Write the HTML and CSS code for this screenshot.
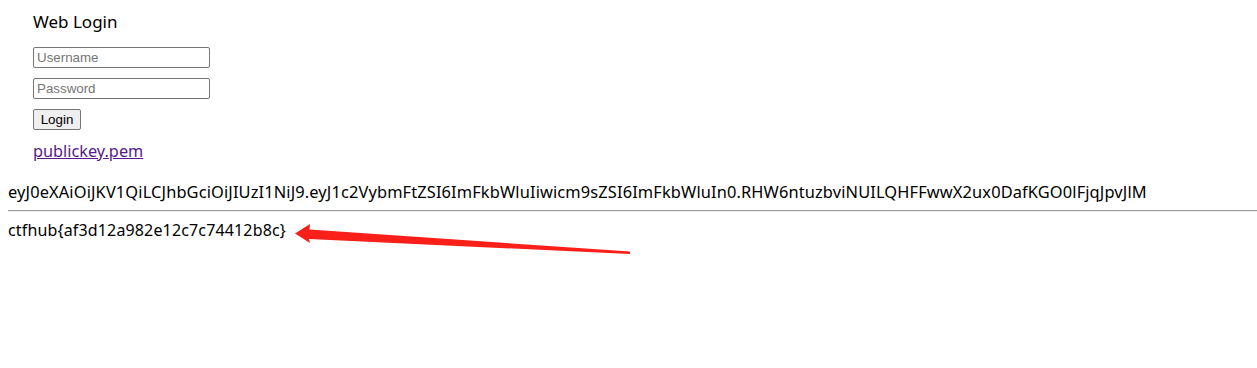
FILE: index.html
```html
<!DOCTYPE html>
<html>
<head>
<meta charset="utf-8">
<link rel="stylesheet" href="styles.css">
</head>
<body>
<div class="login">
  <div class="title">Web Login</div>
  <form class="form">
    <input class="field" type="text" placeholder="Username">
    <input class="field" type="password" placeholder="Password">
    <button class="btn" type="button">Login</button>
  </form>
  <a class="key" href="#">publickey.pem</a>
</div>
<div class="token">eyJ0eXAiOiJKV1QiLCJhbGciOiJIUzI1NiJ9.eyJ1c2VybmFtZSI6ImFkbWluIiwicm9sZSI6ImFkbWluIn0.RHW6ntuzbviNUILQHFFwwX2ux0DafKGO0lFjqJpvJlM</div>
<hr class="rule">
<div class="flag">ctfhub{af3d12a982e12c7c74412b8c}</div>
<svg class="arrow" width="340" height="40" viewBox="290 220 340 40">
  <polygon points="295,233.5 310,224 309.5,229.5 630,251.5 630,254 309,239 310,243" fill="#fb1f1a"/>
</svg>
</body>
</html>
```
FILE: styles.css
```css
html, body {
  margin: 0;
  padding: 0;
  background: #fff;
}
body {
  padding: 8px 0 0 8px;
  font-family: "Noto Sans", "Open Sans", sans-serif;
  color: #000;
  position: relative;
  height: 360px;
}
.login {
  padding-left: 25px;
}
.title {
  padding-top: 2px;
  font-size: 17px;
  line-height: 24px;
  height: 24px;
}
.form {
  margin: 13px 0 0;
  display: flex;
  flex-direction: column;
  align-items: flex-start;
  gap: 10px;
}
.field {
  box-sizing: border-box;
  width: 177px;
  height: 21px;
  margin: 0;
  padding: 1px 3px;
  border: 1px solid #767676;
  border-radius: 2px;
  font-family: "Liberation Sans", Arial, sans-serif;
  font-size: 13.33px;
  color: #000;
}
.field::placeholder {
  color: #757575;
}
.btn {
  box-sizing: border-box;
  width: 48px;
  height: 21px;
  margin: 0;
  padding: 0 6px;
  border: 1px solid #767676;
  border-radius: 2px;
  background: #efefef;
  font-family: "Liberation Sans", Arial, sans-serif;
  font-size: 13.33px;
  color: #000;
}
.key {
  display: block;
  margin-top: 9px;
  font-size: 16.3px;
  line-height: 24px;
  color: #551a8b;
  text-decoration: underline;
  width: max-content;
}
.token {
  margin-top: 18px;
  font-size: 16.4px;
  letter-spacing: 0.13px;
  line-height: 22px;
  white-space: nowrap;
}
.rule {
  margin: 7px 0 0 0;
  border: 0;
  border-top: 1px solid #9a9a9a;
  border-bottom: 1px solid #eeeeee;
  height: 0;
}
.flag {
  margin-top: 7px;
  font-size: 16px;
  letter-spacing: 0.15px;
  line-height: 22px;
}
.arrow {
  position: absolute;
  left: 290px;
  top: 220px;
}
```
